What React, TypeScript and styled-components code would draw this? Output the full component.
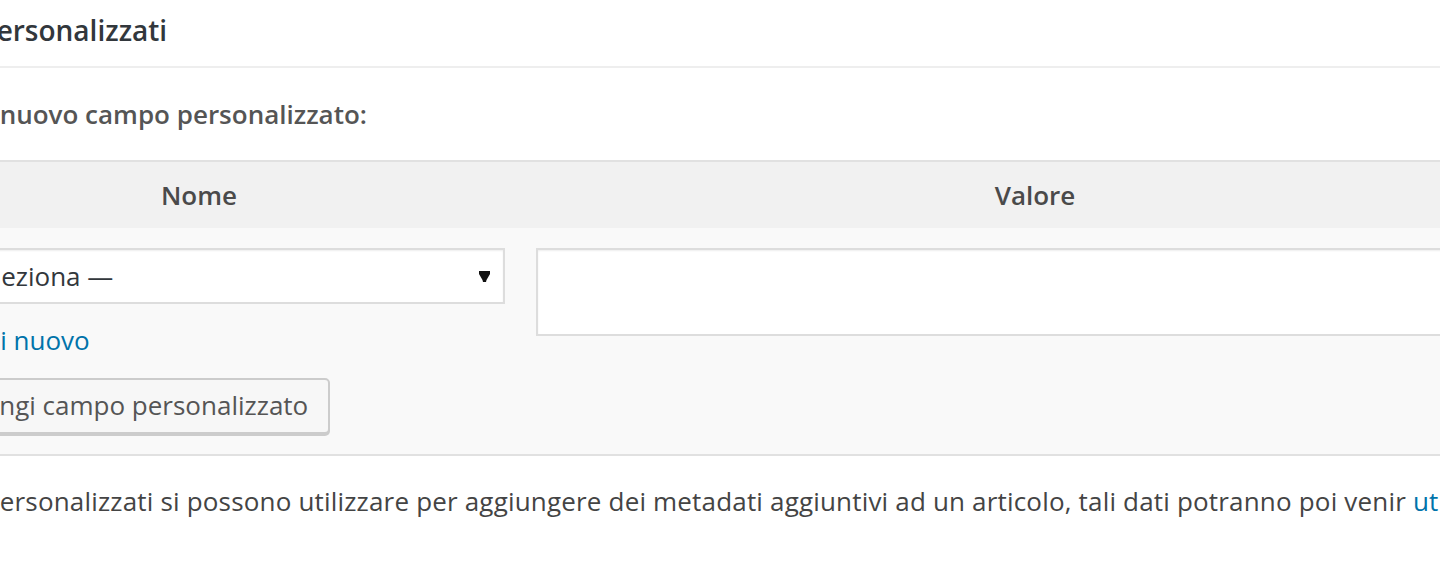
import styled, { createGlobalStyle } from 'styled-components';

const GlobalStyle = createGlobalStyle`
	html, body {
		margin: 0;
		padding: 0;
		background: #ffffff;
		overflow: hidden;
	}
	body {
		width: 1440px;
		height: 564px;
		font-family: 'Open Sans', 'Noto Sans', sans-serif;
		color: #444444;
	}
`;

const Postbox = styled.div`
	margin-left: -134px;
	width: 1720px;
	background: #ffffff;
`;

const Handle = styled.h3`
	margin: 0;
	padding: 10px 24px 16px 20px;
	font-size: 28px;
	line-height: 40px;
	font-weight: 600;
	color: #32373c;
	border-bottom: 2px solid #eeeeee;
`;

const Inside = styled.div`
	padding: 0 24px;
`;

const Lead = styled.p`
	margin: 28px 0 28px -5px;
	font-size: 26px;
	line-height: 36px;
	font-weight: 600;
	color: #555555;
`;

const Table = styled.div`
	display: grid;
	grid-template-columns: 618px 1054px;
	width: 1672px;
	border-top: 2px solid #e1e1e1;
	border-bottom: 2px solid #e1e1e1;
	background: #f9f9f9;
`;

const HeadCell = styled.div`
	padding: 15px 0;
	background: #f1f1f1;
	text-align: center;
	font-size: 26px;
	line-height: 36px;
	font-weight: 600;
	color: #4a4a4a;
`;

const Cell = styled.div<{ $left?: boolean }>`
	display: flex;
	flex-direction: column;
	align-items: flex-start;
	padding: ${({ $left }) => ($left ? '20px 3px 20px 20px' : '20px 0 20px 28px')};
`;

const Select = styled.div`
	box-sizing: border-box;
	display: flex;
	align-items: center;
	justify-content: space-between;
	width: calc(100% - 14px);
	margin-left: 14px;
	height: 56px;
	padding: 0 13px 0 7px;
	background: #ffffff;
	border: 2px solid #dddddd;
	box-shadow: inset 0 1px 2px rgba(0, 0, 0, 0.07);
	font-size: 26px;
	color: #32373c;
`;

const Arrow = styled.svg`
	width: 11px;
	height: 14px;
`;

const Link = styled.a`
	margin-top: 18px;
	margin-left: -2px;
	font-size: 26px;
	line-height: 36px;
	color: #0073aa;
	text-decoration: none;
`;

const Button = styled.button`
	box-sizing: border-box;
	margin-top: 20px;
	height: 56px;
	padding: 0 20px 2px;
	background: #f7f7f7;
	border: 2px solid #cccccc;
	border-radius: 5px;
	box-shadow: 0 2px 0 #cccccc;
	font-family: inherit;
	font-size: 26px;
	color: #555555;
`;

const TextArea = styled.div`
	box-sizing: border-box;
	width: calc(100% - 32px);
	height: 88px;
	background: #ffffff;
	border: 2px solid #dddddd;
	box-shadow: inset 0 1px 2px rgba(0, 0, 0, 0.07);
`;

const Note = styled.p`
	margin: 27px 0 0 -2px;
	font-size: 26px;
	line-height: 36px;
	letter-spacing: 0.18px;
	white-space: nowrap;
	color: #444444;
`;

const NoteLink = styled.span`
	color: #0073aa;
`;

const App = () => {
	return (
		<>
			<GlobalStyle />
			<Postbox>
				<Handle>Campi personalizzati</Handle>
				<Inside>
					<Lead>Aggiungi nuovo campo personalizzato:</Lead>
					<Table>
						<HeadCell>Nome</HeadCell>
						<HeadCell>Valore</HeadCell>
						<Cell $left>
							<Select>
								<span>— Seleziona —</span>
								<Arrow viewBox="0 0 11 14">
									<path d="M0 2 L11 2 L11 5 L7.5 11 L7 13 L4 13 L3.5 11 L0 5 Z" fill="#111" />
								</Arrow>
							</Select>
							<Link href="#">Inserisci nuovo</Link>
							<Button>Aggiungi campo personalizzato</Button>
						</Cell>
						<Cell>
							<TextArea />
						</Cell>
					</Table>
					<Note>
						I campi personalizzati si possono utilizzare per aggiungere dei metadati aggiuntivi ad un
						articolo, tali dati potranno poi venir <NoteLink>utilizzati nel tuo tema</NoteLink>.
					</Note>
				</Inside>
			</Postbox>
		</>
	);
};

export default App;
